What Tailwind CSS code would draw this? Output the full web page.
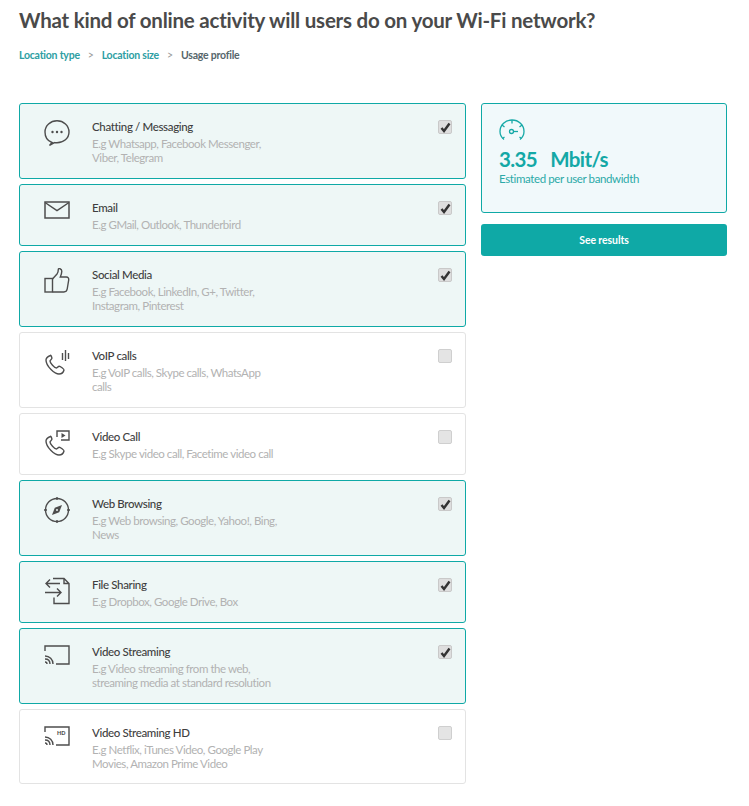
<!DOCTYPE html>
<html lang="en">
<head>
  <meta charset="UTF-8" />
  <title>Usage profile</title>
  <script src="https://cdn.jsdelivr.net/npm/@tailwindcss/browser@4"></script>
</head>
<body class="bg-white font-['Lato',sans-serif] text-[#444]">
<div class="w-[749px] h-[806px] overflow-hidden pl-[19px] pr-[22px]">
  <h1 class="pt-[6px] text-[20.5px] leading-[28px] tracking-[-0.22px] font-bold text-[#4a4a4a]">What kind of online activity will users do on your Wi-Fi network?</h1>
  <nav class="mt-[14px] flex items-center text-[10.5px] leading-[14px] tracking-[-0.22px] font-bold">
    <a class="text-[#2d9ea3]">Location type</a>
    <span class="mx-[8px] font-normal text-[#999]">&gt;</span>
    <a class="text-[#2d9ea3]">Location size</a>
    <span class="mx-[8px] font-normal text-[#999]">&gt;</span>
    <span class="text-[#56666b]">Usage profile</span>
  </nav>

  <div class="mt-[41px] flex items-start gap-[15px]">
    <div class="w-[447px] flex flex-col gap-[5px]">

      <label class="h-[76px] flex rounded-[3px] border border-[#0fa9a6] bg-[#eef7f6] pl-[24px] pr-[14px] pt-[15px]">
        <svg class="w-[26px] h-[28px] shrink-0" viewBox="0 0 26 28" fill="none" stroke="#4d4d4d" stroke-width="1.400"><path d="M8 23.500C3.800 22 1 18 1 13 1 6.500 6.500 1.800 13 1.800S25 6.500 25 13s-5.500 10.800-12 10.800c-.9 0-1.800 0-2.600-.2L5.500 26.500z"/><circle cx="8.500" cy="13" r="1.200" fill="#4d4d4d" stroke="none"/><circle cx="13" cy="13" r="1.200" fill="#4d4d4d" stroke="none"/><circle cx="17.500" cy="13" r="1.200" fill="#4d4d4d" stroke="none"/></svg>
        <div class="ml-[22px] flex-1">
          <div class="text-[11.5px] leading-[16px] tracking-[-0.35px] font-medium text-[#3f3f3f]">Chatting / Messaging</div>
          <div class="mt-[2px] w-[190px] text-[11.5px] leading-[14px] tracking-[-0.45px] text-[#b2b2b2]">E.g Whatsapp, Facebook Messenger, Viber, Telegram</div>
        </div>
        <span class="mt-[1px] w-[14px] h-[14px] -mr-px flex items-center justify-center rounded-[2px] border border-[#c9c9c9] bg-[#dedede]"><svg class="w-[11px] h-[11px]" viewBox="0 0 11 11" fill="none" stroke="#333" stroke-width="2.400"><path d="M1.500 6l2.500 3 5.500-7.500"/></svg></span>
      </label>

      <label class="h-[62px] flex rounded-[3px] border border-[#0fa9a6] bg-[#eef7f6] pl-[24px] pr-[14px] pt-[15px]">
        <svg class="w-[26px] h-[28px] shrink-0" viewBox="0 0 26 28" fill="none" stroke="#4d4d4d" stroke-width="1.500"><rect x="1" y="2" width="24" height="16"/><path d="M1 2.500l12 8 12-8"/></svg>
        <div class="ml-[22px] flex-1">
          <div class="text-[11.5px] leading-[16px] tracking-[-0.35px] font-medium text-[#3f3f3f]">Email</div>
          <div class="mt-[2px] w-[190px] text-[11.5px] leading-[14px] tracking-[-0.45px] text-[#b2b2b2]">E.g GMail, Outlook, Thunderbird</div>
        </div>
        <span class="mt-[1px] w-[14px] h-[14px] -mr-px flex items-center justify-center rounded-[2px] border border-[#c9c9c9] bg-[#dedede]"><svg class="w-[11px] h-[11px]" viewBox="0 0 11 11" fill="none" stroke="#333" stroke-width="2.400"><path d="M1.500 6l2.500 3 5.500-7.500"/></svg></span>
      </label>

      <label class="h-[76px] flex rounded-[3px] border border-[#0fa9a6] bg-[#eef7f6] pl-[24px] pr-[14px] pt-[15px]">
        <svg class="w-[26px] h-[28px] shrink-0" viewBox="0 0 26 28" fill="none" stroke="#4d4d4d" stroke-width="1.400"><rect x="1" y="11.500" width="7.500" height="13.500"/><path d="M8.500 12l4.500-5c1-1.200 1.300-3 1.300-4.500 0-1.500 3.500-1.200 3.500 1.800 0 2-.8 4-1.500 5.700h6c1.800 0 2.700 1.300 2.400 3l-1.500 9c-.3 1.800-1.500 3-3.300 3H8.500"/></svg>
        <div class="ml-[22px] flex-1">
          <div class="text-[11.5px] leading-[16px] tracking-[-0.35px] font-medium text-[#3f3f3f]">Social Media</div>
          <div class="mt-[2px] w-[190px] text-[11.5px] leading-[14px] tracking-[-0.45px] text-[#b2b2b2]">E.g Facebook, LinkedIn, G+, Twitter, Instagram, Pinterest</div>
        </div>
        <span class="mt-[1px] w-[14px] h-[14px] -mr-px flex items-center justify-center rounded-[2px] border border-[#c9c9c9] bg-[#dedede]"><svg class="w-[11px] h-[11px]" viewBox="0 0 11 11" fill="none" stroke="#333" stroke-width="2.400"><path d="M1.500 6l2.500 3 5.500-7.500"/></svg></span>
      </label>

      <label class="h-[76px] flex rounded-[3px] border border-[#e3e3e3] bg-white pl-[24px] pr-[14px] pt-[15px]">
        <svg class="w-[26px] h-[28px] shrink-0" viewBox="0 0 26 28" fill="none" stroke="#4d4d4d" stroke-width="1.400"><path d="M6.500 7.500c-2 .8-4.500 2.500-4.500 4.500 0 3.500 2.500 7 5 9.500s5.500 4.500 8 4.500c2.500 0 4.500-2 5-4 .2-.8-3.800-3.800-4.800-3.800-1 0-1.700 1.800-2.700 1.800-2 0-6.500-5-6.500-7 0-1 1.900-1.700 1.900-2.700 0-1-1-3.300-1.400-3z"/><path d="M18.500 5v7M21.500 2v11M24.500 5v6"/></svg>
        <div class="ml-[22px] flex-1">
          <div class="text-[11.5px] leading-[16px] tracking-[-0.35px] font-medium text-[#3f3f3f]">VoIP calls</div>
          <div class="mt-[2px] w-[190px] text-[11.5px] leading-[14px] tracking-[-0.45px] text-[#b2b2b2]">E.g VoIP calls, Skype calls, WhatsApp calls</div>
        </div>
        <span class="mt-[1px] w-[14px] h-[14px] -mr-px rounded-[2px] border border-[#cfcfcf] bg-[#e4e4e4]"></span>
      </label>

      <label class="h-[62px] flex rounded-[3px] border border-[#e3e3e3] bg-white pl-[24px] pr-[14px] pt-[15px]">
        <svg class="w-[26px] h-[28px] shrink-0" viewBox="0 0 26 28" fill="none" stroke="#4d4d4d" stroke-width="1.400"><path d="M6.500 7.500c-2 .8-4.500 2.500-4.500 4.500 0 3.500 2.500 7 5 9.500s5.500 4.500 8 4.500c2.500 0 4.500-2 5-4 .2-.8-3.800-3.800-4.800-3.800-1 0-1.700 1.800-2.700 1.800-2 0-6.500-5-6.500-7 0-1 1.900-1.700 1.900-2.700 0-1-1-3.300-1.400-3z"/><path d="M13 8V2h12v9h-8"/><path d="M17.500 4l4 2.500-4 2.500z" fill="#4d4d4d" stroke="none"/></svg>
        <div class="ml-[22px] flex-1">
          <div class="text-[11.5px] leading-[16px] tracking-[-0.35px] font-medium text-[#3f3f3f]">Video Call</div>
          <div class="mt-[2px] w-[200px] text-[11.5px] leading-[14px] tracking-[-0.45px] text-[#b2b2b2]">E.g Skype video call, Facetime video call</div>
        </div>
        <span class="mt-[1px] w-[14px] h-[14px] -mr-px rounded-[2px] border border-[#cfcfcf] bg-[#e4e4e4]"></span>
      </label>

      <label class="h-[76px] flex rounded-[3px] border border-[#0fa9a6] bg-[#eef7f6] pl-[24px] pr-[14px] pt-[15px]">
        <svg class="w-[26px] h-[28px] shrink-0" viewBox="0 0 26 28" fill="none" stroke="#4d4d4d" stroke-width="1.400"><circle cx="13" cy="14" r="11.500"/><path d="M13 1v3M13 24v3M0 14h3M23 14h3"/><path d="M18 9l-2.800 7.200L8 19l2.800-7.200z" fill="#4d4d4d" stroke="none"/><circle cx="13" cy="14" r="1" fill="#eef7f6" stroke="none"/></svg>
        <div class="ml-[22px] flex-1">
          <div class="text-[11.5px] leading-[16px] tracking-[-0.35px] font-medium text-[#3f3f3f]">Web Browsing</div>
          <div class="mt-[2px] w-[190px] text-[11.5px] leading-[14px] tracking-[-0.45px] text-[#b2b2b2]">E.g Web browsing, Google, Yahoo!, Bing, News</div>
        </div>
        <span class="mt-[1px] w-[14px] h-[14px] -mr-px flex items-center justify-center rounded-[2px] border border-[#c9c9c9] bg-[#dedede]"><svg class="w-[11px] h-[11px]" viewBox="0 0 11 11" fill="none" stroke="#333" stroke-width="2.400"><path d="M1.500 6l2.500 3 5.500-7.500"/></svg></span>
      </label>

      <label class="h-[62px] flex rounded-[3px] border border-[#0fa9a6] bg-[#eef7f6] pl-[24px] pr-[14px] pt-[15px]">
        <svg class="w-[26px] h-[28px] shrink-0" viewBox="0 0 26 28" fill="none" stroke="#4d4d4d" stroke-width="1.400"><path d="M9 1.500h11l5 5v20H10v-6M20 1.500v5h5"/><path d="M16 6.500H2M6 2.500l-4 4 4 4M1 15.500h16M13 11.500l4 4-4 4"/></svg>
        <div class="ml-[22px] flex-1">
          <div class="text-[11.5px] leading-[16px] tracking-[-0.35px] font-medium text-[#3f3f3f]">File Sharing</div>
          <div class="mt-[2px] w-[190px] text-[11.5px] leading-[14px] tracking-[-0.45px] text-[#b2b2b2]">E.g Dropbox, Google Drive, Box</div>
        </div>
        <span class="mt-[1px] w-[14px] h-[14px] -mr-px flex items-center justify-center rounded-[2px] border border-[#c9c9c9] bg-[#dedede]"><svg class="w-[11px] h-[11px]" viewBox="0 0 11 11" fill="none" stroke="#333" stroke-width="2.400"><path d="M1.500 6l2.500 3 5.500-7.500"/></svg></span>
      </label>

      <label class="h-[76px] flex rounded-[3px] border border-[#0fa9a6] bg-[#eef7f6] pl-[24px] pr-[14px] pt-[15px]">
        <svg class="w-[26px] h-[28px] shrink-0" viewBox="0 0 26 28" fill="none" stroke="#4d4d4d" stroke-width="1.400"><path d="M1 7V2h24v18H12"/><path d="M1 12c4.500 0 8 3.500 8 8M1 15c3 0 5 2 5 5M1 18c1 0 2 1 2 2"/></svg>
        <div class="ml-[22px] flex-1">
          <div class="text-[11.5px] leading-[16px] tracking-[-0.35px] font-medium text-[#3f3f3f]">Video Streaming</div>
          <div class="mt-[2px] w-[190px] text-[11.5px] leading-[14px] tracking-[-0.45px] text-[#b2b2b2]">E.g Video streaming from the web, streaming media at standard resolution</div>
        </div>
        <span class="mt-[1px] w-[14px] h-[14px] -mr-px flex items-center justify-center rounded-[2px] border border-[#c9c9c9] bg-[#dedede]"><svg class="w-[11px] h-[11px]" viewBox="0 0 11 11" fill="none" stroke="#333" stroke-width="2.400"><path d="M1.500 6l2.500 3 5.500-7.500"/></svg></span>
      </label>

      <label class="h-[75px] flex rounded-[3px] border border-[#e3e3e3] bg-white pl-[24px] pr-[14px] pt-[15px]">
        <svg class="w-[26px] h-[28px] shrink-0" viewBox="0 0 26 28" fill="none" stroke="#4d4d4d" stroke-width="1.400"><path d="M1 7V2h24v18H12"/><path d="M1 12c4.500 0 8 3.500 8 8M1 15c3 0 5 2 5 5M1 18c1 0 2 1 2 2"/><text x="13" y="10" font-size="5.500" font-weight="900" fill="#4d4d4d" stroke="none" font-family="Lato">HD</text></svg>
        <div class="ml-[22px] flex-1">
          <div class="text-[11.5px] leading-[16px] tracking-[-0.35px] font-medium text-[#3f3f3f]">Video Streaming HD</div>
          <div class="mt-[2px] w-[190px] text-[11.5px] leading-[14px] tracking-[-0.45px] text-[#b2b2b2]">E.g Netflix, iTunes Video, Google Play Movies, Amazon Prime Video</div>
        </div>
        <span class="mt-[1px] w-[14px] h-[14px] -mr-px rounded-[2px] border border-[#cfcfcf] bg-[#e4e4e4]"></span>
      </label>
    </div>

    <aside class="w-[246px]">
      <div class="h-[110px] rounded-[3px] border border-[#0fa9a6] bg-[#f1f9fb] pl-[17px] pt-[15px]">
        <svg class="w-[26px] h-[22px] block" viewBox="0 0 26 22" fill="none" stroke="#17a9a7" stroke-width="1.300"><path d="M5 20.500C2.500 18.500 1 15.500 1 12.500 1 6 6.500 1 13 1s12 5 12 11.500c0 3-1.500 6-4 8"/><path d="M13 1v3.500M3 6l2.500 2M23 6l-2.500 2M3.500 19.500l2-1.500M22.500 19.500l-2-1.500"/><circle cx="12.500" cy="12.500" r="2"/><path d="M14.500 12.500H19"/></svg>
        <div class="mt-[6px] flex text-[20.5px] leading-[25px] tracking-[-0.6px] font-bold text-[#14a8a6]"><span>3.35</span><span class="ml-[13px]">Mbit/s</span></div>
        <div class="text-[11.5px] leading-[14px] tracking-[-0.38px] text-[#2ba9a8]">Estimated per user bandwidth</div>
      </div>
      <button class="mt-[11px] w-full h-[32px] pt-[1px] rounded-[3px] bg-[#0fa9a6] text-[10.5px] tracking-[-0.1px] font-bold text-white">See results</button>
    </aside>
  </div>
</div>
</body>
</html>
